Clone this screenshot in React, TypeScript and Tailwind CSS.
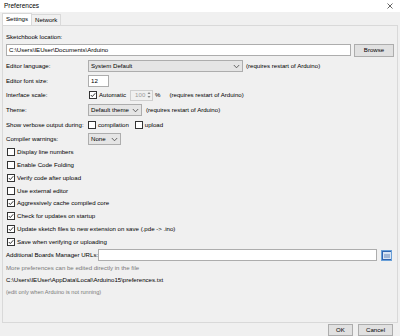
import React from "react";

const Chevron = () => (
  <svg width="7" height="5" viewBox="0 0 7 5" className="shrink-0">
    <polyline points="0.8,1 3.5,3.8 6.2,1" fill="none" stroke="#444" strokeWidth="0.8" />
  </svg>
);

const Check: React.FC<{ on?: boolean; className?: string }> = ({ on, className }) => (
  <span
    className={
      "flex h-[8px] w-[8px] shrink-0 items-center justify-center border border-[#333] bg-white " +
      (className ?? "")
    }
  >
    {on && (
      <svg width="6" height="6" viewBox="0 0 6 6">
        <polyline points="0.8,3 2.3,4.6 5.3,1.2" fill="none" stroke="#222" strokeWidth="0.9" />
      </svg>
    )}
  </span>
);

const Select: React.FC<{ label: string; w: string }> = ({ label, w }) => (
  <div
    className={
      "flex h-[12px] shrink-0 items-center justify-between gap-[2px] border border-[#adadad] bg-[#e5e5e5] pl-[2px] pr-[2px] " +
      w
    }
  >
    <span className="whitespace-nowrap">{label}</span>
    <Chevron />
  </div>
);

const Restart = () => <span className="whitespace-nowrap">(requires restart of Arduino)</span>;

const options: [string, boolean][] = [
  ["Display line numbers", false],
  ["Enable Code Folding", false],
  ["Verify code after upload", true],
  ["Use external editor", false],
  ["Aggressively cache compiled core", true],
  ["Check for updates on startup", true],
  ["Update sketch files to new extension on save (.pde -> .ino)", true],
  ["Save when verifying or uploading", true],
];

export default function App() {
  return (
    <div
      className="flex h-[336px] w-[400px] flex-col overflow-hidden whitespace-nowrap bg-[#f0f0f0] text-[6.1px] leading-none text-black"
      style={{ fontFamily: '"Liberation Sans", Arial, sans-serif' }}
    >
      {/* title bar */}
      <div className="flex h-[12px] items-center justify-between bg-white pl-[4px] pr-[7px] text-[6.5px]">
        <span>Preferences</span>
        <svg width="6" height="6" viewBox="0 0 6 6">
          <path d="M0.5 0.5 L5.5 5.5 M5.5 0.5 L0.5 5.5" stroke="#222" strokeWidth="0.7" />
        </svg>
      </div>

      {/* tabs */}
      <div className="flex h-[13px] items-end pl-[2px] pt-[1px]">
        <div className="flex h-[12px] items-center border border-b-0 border-[#d9d9d9] bg-white px-[3px]">Settings</div>
        <div className="flex h-[11px] items-center border border-b-0 border-l-0 border-[#d9d9d9] bg-[#f0f0f0] px-[3px]">
          Network
        </div>
      </div>

      {/* panel */}
      <div className="mx-[2px] flex h-[298px] flex-col border border-[#d9d9d9] bg-[#f0f0f0] px-[3px] pt-[6px]">
        <div className="flex h-[10px] items-center">Sketchbook location:</div>
        <div className="mt-[2px] flex h-[12px] items-center gap-[3px]">
          <div className="flex h-[12px] w-[345px] items-center border border-[#adadad] bg-white pl-[2px]">
            C:\Users\IEUser\Documents\Arduino
          </div>
          <div className="flex h-[13px] w-[40px] items-center justify-center border border-[#adadad] bg-[#e1e1e1]">
            Browse
          </div>
        </div>

        <div className="mt-[3px] flex flex-col">
          <div className="flex h-[14.6px] items-center">
            <span className="w-[82px] shrink-0">Editor language:</span>
            <Select label="System Default" w="w-[155px]" />
            <span className="ml-[3px]">
              <Restart />
            </span>
          </div>
          <div className="flex h-[14.6px] items-center">
            <span className="w-[82px] shrink-0">Editor font size:</span>
            <div className="flex h-[12px] w-[21px] items-center border border-[#adadad] bg-white pl-[2px]">12</div>
          </div>
          <div className="flex h-[14.6px] items-center">
            <span className="w-[82px] shrink-0">Interface scale:</span>
            <Check on className="ml-[1px]" />
            <span className="ml-[2px]">Automatic</span>
            <div className="ml-[4px] flex h-[11px] w-[23px] items-center justify-between border border-[#cfcfcf] bg-[#f0f0f0] pl-[4px] pr-[1px] text-[#9a9a9a]">
              <span>100</span>
              <svg width="4" height="8" viewBox="0 0 4 8">
                <path d="M0.5 3 L2 1 L3.5 3 Z M0.5 5 L2 7 L3.5 5 Z" fill="#888" />
              </svg>
            </div>
            <span className="ml-[2px]">%</span>
            <span className="ml-[9px]">
              <Restart />
            </span>
          </div>
          <div className="flex h-[14.6px] items-center">
            <span className="w-[82px] shrink-0">Theme:</span>
            <Select label="Default theme" w="w-[54px]" />
            <span className="ml-[4px]">
              <Restart />
            </span>
          </div>
          <div className="flex h-[14.6px] items-center">
            <span className="w-[82px] shrink-0">Show verbose output during:</span>
            <Check />
            <span className="ml-[2px]">compilation</span>
            <Check className="ml-[6px]" />
            <span className="ml-[2px]">upload</span>
          </div>
          <div className="flex h-[14.6px] items-center">
            <span className="w-[82px] shrink-0">Compiler warnings:</span>
            <Select label="None" w="w-[33px]" />
          </div>
        </div>

        <div className="-mt-[1px] flex flex-col">
          {options.map(([t, on]) => (
            <div key={t} className="flex h-[12.86px] items-center pl-[1px]">
              <Check on={on} />
              <span className="ml-[2px]">{t}</span>
            </div>
          ))}
        </div>

        <div className="flex h-[14px] items-center">
          <span className="w-[92px] shrink-0">Additional Boards Manager URLs:</span>
          <div className="h-[12px] w-[279px] shrink-0 border border-[#adadad] bg-white" />
          <div className="ml-[4px] flex h-[11px] w-[11px] shrink-0 items-center justify-center border border-[#6aa0d8] bg-[#2f64b0]">
            <div className="h-[7px] w-[8px] border border-[#d8e4f4] border-t-[2px] bg-[#9eb5d6]" />
          </div>
        </div>
        <div className="flex h-[12px] items-center text-[#7a7a7a]">More preferences can be edited directly in the file</div>
        <div className="flex h-[12px] items-center">C:\Users\IEUser\AppData\Local\Arduino15\preferences.txt</div>
        <div className="flex h-[12px] items-center text-[5.6px] text-[#7a7a7a]">(edit only when Arduino is not running)</div>
      </div>

      {/* buttons */}
      <div className="flex flex-1 items-start justify-end gap-[5px] pr-[7px] pt-[1px]">
        <div className="flex h-[12px] w-[25px] items-center justify-center border border-[#adadad] bg-[#e1e1e1]">OK</div>
        <div className="flex h-[12px] w-[35px] items-center justify-center border border-[#adadad] bg-[#e1e1e1]">
          Cancel
        </div>
      </div>
    </div>
  );
}
